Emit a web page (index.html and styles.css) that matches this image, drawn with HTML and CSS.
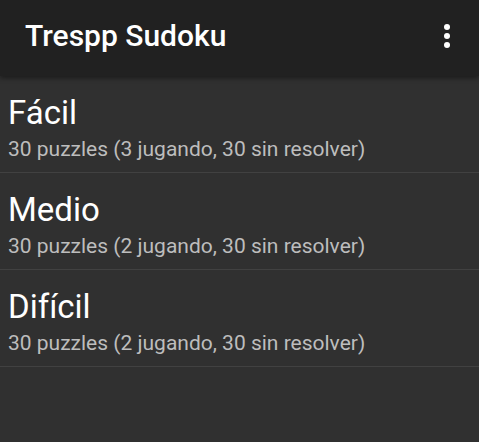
FILE: index.html
```html
<!DOCTYPE html>
<html>
<head>
<meta charset="utf-8">
<link rel="stylesheet" href="styles.css">
</head>
<body>
<div class="app">
  <header class="toolbar">
    <div class="title">Trespp Sudoku</div>
    <div class="menu">
      <svg width="8" height="26" viewBox="0 0 8 26"><circle cx="4" cy="4" r="3" fill="#fff"/><circle cx="4" cy="13" r="3" fill="#fff"/><circle cx="4" cy="22" r="3" fill="#fff"/></svg>
    </div>
  </header>
  <main class="list">
    <div class="item">
      <div class="item-title">Fácil</div>
      <div class="item-sub">30 puzzles (3 jugando, 30 sin resolver)</div>
    </div>
    <div class="item">
      <div class="item-title">Medio</div>
      <div class="item-sub">30 puzzles (2 jugando, 30 sin resolver)</div>
    </div>
    <div class="item">
      <div class="item-title">Difícil</div>
      <div class="item-sub">30 puzzles (2 jugando, 30 sin resolver)</div>
    </div>
  </main>
</div>
</body>
</html>
```
FILE: styles.css
```css
html, body {
  margin: 0;
  padding: 0;
  background: #303030;
  font-family: Roboto, "Liberation Sans", sans-serif;
}
.app {
  width: 479px;
  height: 442px;
  background: #303030;
  overflow: hidden;
}
.toolbar {
  height: 76px;
  background: #212121;
  display: flex;
  align-items: center;
  justify-content: space-between;
  padding: 0 28px 0 25px;
  box-sizing: border-box;
  box-shadow: 0 2px 5px rgba(0,0,0,0.45);
  position: relative;
}
.title {
  color: #fff;
  font-size: 30px;
  font-weight: 500;
  margin-top: -6px;
}
.menu {
  display: flex;
  margin-top: -4px;
}
.list {
  display: flex;
  flex-direction: column;
}
.item {
  height: 97px;
  box-sizing: border-box;
  border-bottom: 1px solid #414141;
  padding: 17px 8px 0 8px;
}
.item-title {
  color: #fff;
  font-size: 33px;
  line-height: 40px;
}
.item-sub {
  color: #bdbdbd;
  font-size: 21px;
  line-height: 28px;
  margin-top: 2px;
}
```
